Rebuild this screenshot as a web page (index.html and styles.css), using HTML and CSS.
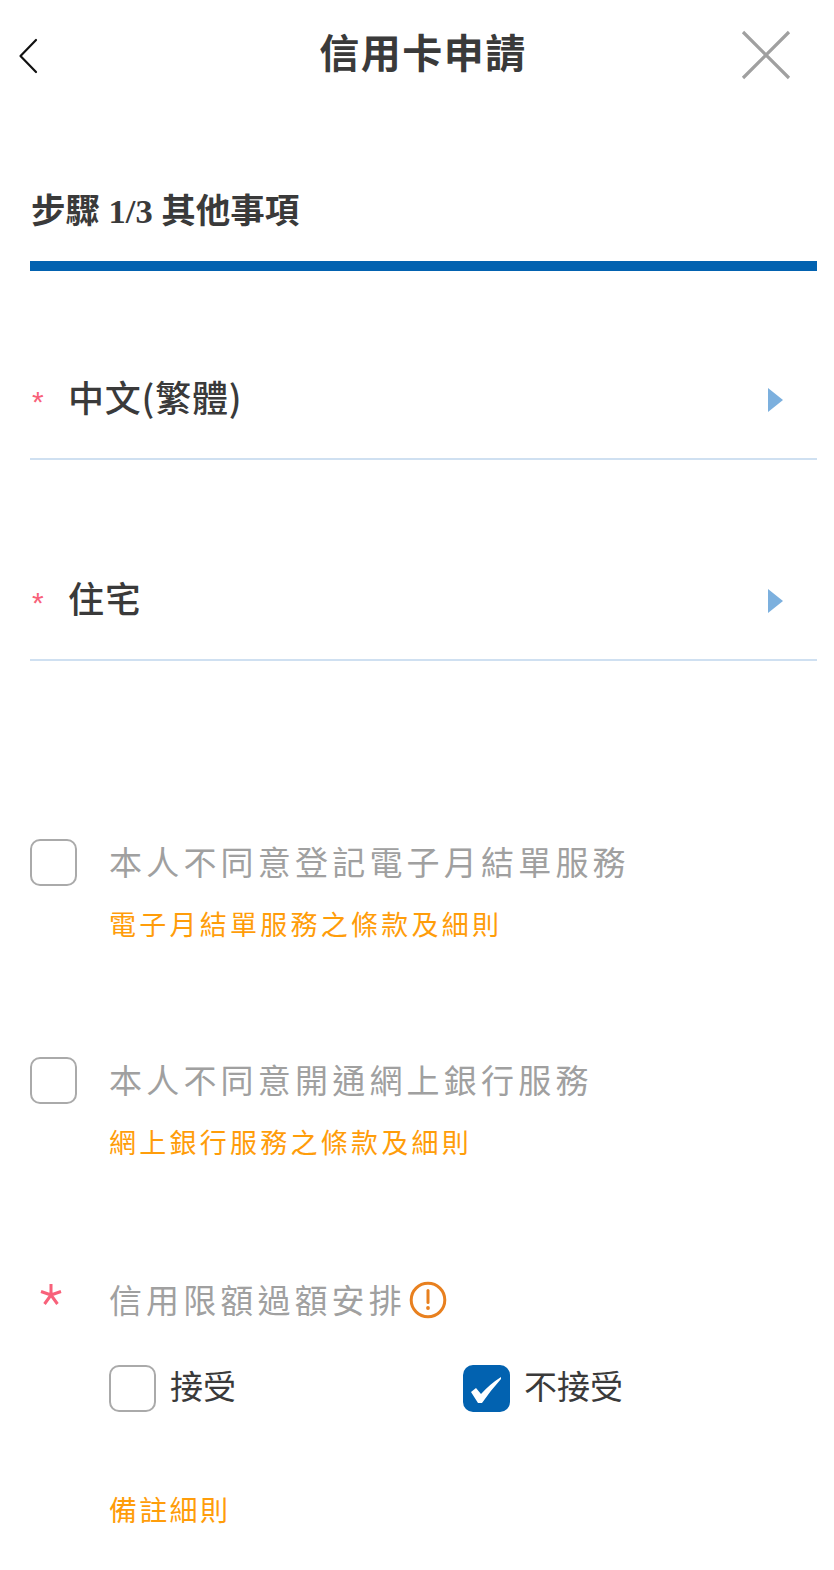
FILE: index.html
```html
<!DOCTYPE html>
<html lang="zh-Hant">

<head>
    <meta charset="UTF-8">
    <meta name="viewport" content="width=device-width, initial-scale=1.0">
    <title>信用卡申請</title>
    <link rel="stylesheet" href="styles.css">
</head>

<body>
    <div class="wrapper">
        <div class="top-bar">
            <svg class="back-ico" viewBox="0 0 20 36" width="20" height="36">
                <path d="M18 2 L2.5 18 L18 34" fill="none" stroke="#111" stroke-width="2.2" stroke-linecap="round" stroke-linejoin="round" />
            </svg>
            <h1>信用卡申請</h1>
            <svg class="close-ico" viewBox="0 0 50 50" width="50" height="50">
                <path d="M2 2 L48 48 M48 2 L2 48" fill="none" stroke="#a0a0a0" stroke-width="3.2" />
            </svg>
        </div>

        <div class="step-title">步驟 1/3 其他事項</div>
        <div class="step-line"></div>

        <div class="select-row first-row">
            <span class="star-small">*</span>
            <span class="select-text">中文(繁體)</span>
            <i class="arrow-ico"></i>
        </div>
        <div class="select-row second-row">
            <span class="star-small">*</span>
            <span class="select-text">住宅</span>
            <i class="arrow-ico"></i>
        </div>

        <div class="check-row first-check">
            <span class="check-box"></span>
            <span class="check-text">本人不同意登記電子月結單服務</span>
        </div>
        <div class="link-text">電子月結單服務之條款及細則</div>

        <div class="check-row second-check">
            <span class="check-box"></span>
            <span class="check-text">本人不同意開通網上銀行服務</span>
        </div>
        <div class="link-text">網上銀行服務之條款及細則</div>

        <div class="limit-row">
            <svg class="star-big" viewBox="0 0 24 24" width="24" height="24">
                <path d="M12 1 V12 M12 12 L2 8.5 M12 12 L22 8.5 M12 12 L5.5 21 M12 12 L18.5 21" fill="none" stroke="#f8617a" stroke-width="3" />
            </svg>
            <span class="check-text">信用限額過額安排</span>
            <svg class="info-ico" viewBox="0 0 38 38" width="38" height="38">
                <circle cx="19" cy="19" r="16.8" fill="none" stroke="#e8801f" stroke-width="3" />
                <path d="M19 9.5 V21.5" stroke="#e8801f" stroke-width="3" stroke-linecap="round" />
                <circle cx="19" cy="27" r="1.9" fill="#e8801f" />
            </svg>
        </div>
        <div class="option-row">
            <div class="option-item">
                <span class="check-box"></span>
                <span class="option-text">接受</span>
            </div>
            <div class="option-item">
                <span class="check-box checked">
                    <svg viewBox="0 0 46 46" width="46" height="46">
                        <path d="M8 27 L13 23 L18 29 Q27 19 38 12 L38 14 Q28 25 19 38 H15 Z" fill="#fff" />
                    </svg>
                </span>
                <span class="option-text">不接受</span>
            </div>
        </div>
        <div class="note-text">備註細則</div>
    </div>
</body>

</html>
```

FILE: styles.css
```css
* {
    margin: 0;
    padding: 0;
    box-sizing: border-box;
}

body,
html {
    width: 100%;
    height: 100%;
    background-color: #fff;
}

body {
    font-family: "Noto Sans CJK TC", "Noto Sans", sans-serif;
    color: #3a3a3a;
}

.wrapper {
    height: 1570px;
    overflow: hidden;
    padding: 0 17px 0 30px;
}

.top-bar {
    display: flex;
    align-items: center;
    height: 110px;
    margin-left: -12px;
}

.top-bar h1 {
    flex: 1;
    text-align: center;
    font-size: 40px;
    line-height: 102px;
    font-weight: 700;
    letter-spacing: 1.5px;
    color: #3a3a3a;
    padding: 0 0 8px 67px;
}

.back-ico {
    flex: none;
    margin-top: 2px;
}

.close-ico {
    flex: none;
    margin-right: 26px;
}

.step-title {
    margin-top: 66px;
    padding-left: 1px;
    font-family: "Liberation Serif", "Noto Sans CJK TC", serif;
    font-size: 34.5px;
    line-height: 70px;
    height: 70px;
    font-weight: 700;
    color: #3a3a3a;
}

.step-line {
    height: 10px;
    margin-top: 15px;
    background-color: #0262b0;
}

.select-row {
    display: flex;
    align-items: center;
    height: 100px;
    border-bottom: 2px solid #cfe0f1;
    padding-bottom: 18px;
}

.first-row {
    margin-top: 89px;
}

.second-row {
    margin-top: 101px;
}

.star-small {
    width: 38px;
    padding: 4px 0 0 2px;
    font-size: 30px;
    color: #f8617a;
    line-height: 28px;
    font-family: "Liberation Sans", sans-serif;
}

.select-text {
    flex: 1;
    padding-bottom: 8px;
    font-size: 36px;
    line-height: 50px;
    font-weight: 500;
    letter-spacing: 0.8px;
    color: #3a3a3a;
}

.arrow-ico {
    display: block;
    width: 0;
    height: 0;
    margin-right: 34px;
    border-left: 15px solid #7cb0de;
    border-top: 12px solid transparent;
    border-bottom: 12px solid transparent;
}

.check-row {
    display: flex;
    align-items: center;
    gap: 32px;
}

.first-check {
    margin-top: 177px;
}

.second-check {
    margin-top: 112px;
}

.check-box {
    display: block;
    flex: none;
    width: 47px;
    height: 47px;
    border: 2.5px solid #aaa;
    border-radius: 10px;
    background-color: #fff;
}

.check-box.checked {
    border: none;
    background-color: #0262b0;
}

.check-text {
    padding-bottom: 2px;
    font-size: 33px;
    line-height: 46px;
    letter-spacing: 4.2px;
    color: #a0a0a0;
}

.link-text {
    margin-top: 18px;
    margin-left: 79px;
    font-size: 27px;
    line-height: 40px;
    letter-spacing: 3.25px;
    color: #ff9d0a;
}

.limit-row {
    display: flex;
    align-items: center;
    margin-top: 115px;
    height: 46px;
}

.star-big {
    flex: none;
    margin: -10px 46px 0 9px;
}

.limit-row .check-text {
    letter-spacing: 4.1px;
}

.info-ico {
    flex: none;
    margin-left: 3px;
}

.option-row {
    display: flex;
    margin-top: 39px;
    margin-left: 79px;
}

.option-item {
    display: flex;
    align-items: center;
    gap: 14px;
    width: 354px;
}

.option-text {
    padding-bottom: 6px;
    font-size: 33px;
    line-height: 46px;
    color: #3a3a3a;
}

.note-text {
    margin-top: 75px;
    margin-left: 79px;
    font-size: 28px;
    line-height: 40px;
    letter-spacing: 2.3px;
    color: #ff9d0a;
}
```
